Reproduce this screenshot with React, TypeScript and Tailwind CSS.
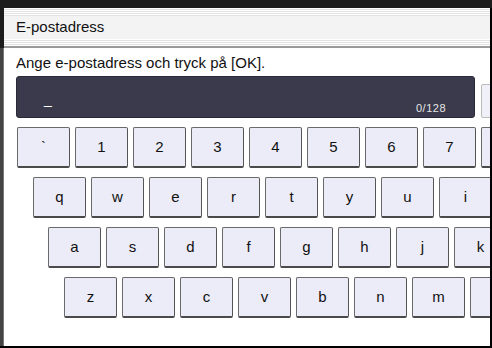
import React from 'react';

// last key of each row runs off the right edge; its label is not visible
const rows: { offset: string; keys: string[] }[] = [
  { offset: 'ml-[13px]', keys: ['`', '1', '2', '3', '4', '5', '6', '7', ''] },
  { offset: 'ml-[29px]', keys: ['q', 'w', 'e', 'r', 't', 'y', 'u', 'i', ''] },
  { offset: 'ml-[44px]', keys: ['a', 's', 'd', 'f', 'g', 'h', 'j', 'k', ''] },
  { offset: 'ml-[60px]', keys: ['z', 'x', 'c', 'v', 'b', 'n', 'm', ''] },
];

const Key: React.FC<{ label: string }> = ({ label }) => (
  <div className="w-[53px] h-[41px] shrink-0 flex items-center justify-center rounded-[2px] bg-[#ececf8] border border-[#6a6a6a] border-b-2 border-b-[#4a4a4a] border-r-[#555] text-[15px] text-[#111]">
    {label}
  </div>
);

const stripes = 'bg-[repeating-linear-gradient(to_bottom,#ffffff_0px,#ffffff_1px,#e2e2e2_1px,#e2e2e2_2px)]';

export default function App() {
  return (
    <div className="w-[492px] h-[348px] overflow-hidden bg-white flex flex-col font-['Liberation_Sans',Arial,sans-serif]">
      <div className="h-[8px] shrink-0 bg-[#1c1c1c]" />
      <div className="flex flex-1 min-h-0">
        <div className="w-[4px] shrink-0 flex flex-col">
          <div className="h-[40px] bg-[#1c1c1c]" />
          <div className="flex-1 bg-[#444] border-r border-r-[#777]" />
        </div>
        <div className="flex-1 min-w-0 flex flex-col overflow-hidden">
          {/* header */}
          <div className="h-[40px] shrink-0 flex flex-col border-b-2 border-b-[#9a9a9a]">
            <div className={`h-[10px] ${stripes}`} />
            <div className="flex-1 bg-[#f3f3f3] flex items-center pl-[12px] text-[15px] text-[#111]">
              E-postadress
            </div>
            <div className={`h-[9px] ${stripes}`} />
          </div>

          <div className="pl-[12px] mt-[5px] h-[20px] flex items-center text-[15px] text-[#111] whitespace-nowrap">
            Ange e-postadress och tryck på [OK].
          </div>

          {/* input */}
          <div className="flex mt-[3px] ml-[12px]">
            <div className="w-[459px] h-[42px] shrink-0 rounded-[3px] bg-[#3a3a4c] border border-[#2a2a36] relative">
              <span className="absolute left-[27px] top-[12px] text-white text-[14px]">_</span>
              <span className="absolute left-[399px] top-[23px] text-[#e6e6e6] text-[11px] tracking-[0.5px]">0/128</span>
            </div>
            <div className="ml-[6px] mt-[8px] h-[34px] w-[20px] shrink-0 rounded-[2px] bg-[#f0f0f8] border border-[#bbb]" />
          </div>

          {/* keyboard */}
          <div className="flex flex-col gap-[9px] mt-[9px]">
            {rows.map((row, i) => (
              <div key={i} className={`flex gap-[5px] ${row.offset}`}>
                {row.keys.map((k, j) => (
                  <Key key={j} label={k} />
                ))}
              </div>
            ))}
          </div>
        </div>
        <div className="w-[2px] shrink-0 bg-black" />
      </div>
      <div className="h-[2px] shrink-0 bg-black" />
    </div>
  );
}
